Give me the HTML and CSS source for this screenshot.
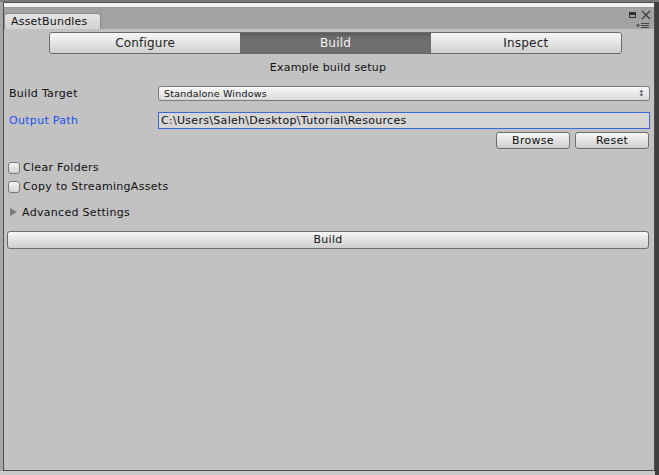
FILE: index.html
```html
<!DOCTYPE html>
<html>
<head>
<meta charset="utf-8">
<link rel="stylesheet" href="styles.css">
</head>
<body>
<div class="backdrop">
  <div class="window">
    <div class="titlestrip"></div>
    <div class="tabbar">
      <div class="tab">AssetBundles</div>
      <div class="wincontrols">
        <div class="ctl-row">
          <span class="maxbox"></span>
          <svg class="closex" width="10" height="10" viewBox="0 0 10 10"><path d="M1 1 L9 9 M9 1 L1 9" stroke="#3a3a3a" stroke-width="1.2"/></svg>
        </div>
        <svg class="menuicon" width="14" height="6" viewBox="0 0 14 6"><path d="M0 1.5 L4 1.5 L2 4.5 Z" fill="#444"/><path d="M5 0.5 H13 M5 2.5 H13 M5 4.5 H13" stroke="#444" stroke-width="1"/></svg>
      </div>
    </div>
    <div class="content">
      <div class="toolbar">
        <div class="tb-btn first">Configure</div>
        <div class="tb-btn active">Build</div>
        <div class="tb-btn last">Inspect</div>
      </div>
      <div class="caption">Example build setup</div>
      <div class="row row-target">
        <div class="label">Build Target</div>
        <div class="popup">Standalone Windows<span class="popup-arrow">&#x2195;</span></div>
      </div>
      <div class="row row-path">
        <div class="label blue">Output Path</div>
        <div class="textfield">C:\Users\Saleh\Desktop\Tutorial\Resources</div>
      </div>
      <div class="btnrow">
        <div class="btn small">Browse</div>
        <div class="btn small">Reset</div>
      </div>
      <div class="check first-check"><span class="box"></span>Clear Folders</div>
      <div class="check"><span class="box"></span>Copy to StreamingAssets</div>
      <div class="foldout"><span class="tri"></span>Advanced Settings</div>
      <div class="btn wide">Build</div>
    </div>
  </div>
</div>
</body>
</html>
```
FILE: styles.css
```css
html, body {
  margin: 0;
  padding: 0;
}
body {
  width: 659px;
  height: 475px;
  overflow: hidden;
  font-family: "DejaVu Sans", Verdana, sans-serif;
  font-size: 11px;
  letter-spacing: 0.3px;
  color: #111;
  background: #9c9c9c;
}
.backdrop {
  width: 659px;
  height: 475px;
  background:
    linear-gradient(to bottom, #7a7a7a 0, #7a7a7a 2px, transparent 2px),
    linear-gradient(to right, transparent 655px, #3e3e3e 655px),
    linear-gradient(to bottom, transparent 471px, #c8c8c8 471px),
    #a6a6a6;
  padding-top: 2px;
  padding-left: 3px;
  box-sizing: border-box;
}
.window {
  width: 652px;
  height: 469px;
  border: 1px solid #4e4e4e;
  box-sizing: border-box;
  background: #c2c2c2;
  display: flex;
  flex-direction: column;
}
.titlestrip {
  height: 4px;
  background: #f2f2f2;
  border-bottom: 1px solid #9a9a9a;
}
.tabbar {
  height: 21px;
  background: #a2a2a2;
  display: flex;
  align-items: flex-start;
  justify-content: space-between;
}
.tab {
  margin-top: 5px;
  height: 16px;
  line-height: 16px;
  width: 97px;
  box-sizing: border-box;
  padding-left: 6px;
  background: linear-gradient(#e4e4e4, #d2d2d2);
  border: 1px solid #8c8c8c;
  border-bottom: none;
  border-radius: 3px 3px 0 0;
  color: #111;
  font-size: 11px;
  letter-spacing: 0.2px;
}
.wincontrols {
  display: flex;
  flex-direction: column;
  align-items: flex-end;
  padding-right: 3px;
  padding-top: 2px;
  gap: 3px;
}
.ctl-row {
  display: flex;
  align-items: center;
  gap: 5px;
}
.maxbox {
  width: 7px;
  height: 6px;
  box-sizing: border-box;
  border: 1px solid #333;
  border-top: 3px solid #333;
}
.closex {
  display: block;
}
.menuicon {
  display: block;
  margin-right: 1px;
}
.content {
  flex: 1;
  padding: 3px 4px 0 4px;
  display: flex;
  flex-direction: column;
}
.toolbar {
  margin-left: 41px;
  width: 573px;
  height: 22px;
  display: flex;
  border: 1px solid #6a6a6a;
  border-radius: 3px;
  box-sizing: border-box;
  overflow: hidden;
}
.tb-btn {
  flex: 1;
  text-align: center;
  line-height: 20px;
  font-size: 12px;
  letter-spacing: 0.2px;
  color: #222;
  background: linear-gradient(#f7f7f7, #dcdcdc 70%, #cfcfcf);
}
.tb-btn.active {
  background: linear-gradient(#5c5c5c, #6e6e6e 25%, #6e6e6e);
  color: #f4f4f4;
}
.caption {
  text-align: center;
  margin-top: 7px;
  height: 14px;
  line-height: 14px;
  padding-right: 2px;
  letter-spacing: 0.2px;
}
.row {
  display: flex;
  align-items: center;
}
.row-target {
  margin-top: 11px;
  height: 15px;
}
.row-path {
  margin-top: 11px;
  height: 17px;
}
.label {
  width: 149px;
  padding-left: 1px;
}
.label.blue {
  color: #1b4fea;
}
.popup {
  width: 492px;
  height: 15px;
  box-sizing: border-box;
  border: 1px solid #7a7a7a;
  border-radius: 3px;
  background: linear-gradient(#f8f8f8, #dadada);
  font-size: 9.5px;
  line-height: 13px;
  padding-left: 5px;
  position: relative;
  letter-spacing: 0.2px;
}
.popup-arrow {
  position: absolute;
  right: 4px;
  top: 0;
  font-size: 8px;
  line-height: 13px;
  color: #333;
}
.textfield {
  width: 492px;
  height: 17px;
  box-sizing: border-box;
  border: 1px solid #3e67d8;
  background: #d6d6d6;
  line-height: 15px;
  padding-left: 2px;
  font-size: 11px;
}
.btnrow {
  display: flex;
  justify-content: flex-end;
  gap: 5px;
  margin-top: 3px;
  padding-right: 1px;
}
.btn {
  box-sizing: border-box;
  border: 1px solid #6e6e6e;
  border-radius: 3px;
  background: linear-gradient(#f7f7f7, #dadada 70%, #cecece);
  text-align: center;
  color: #111;
}
.btn.small {
  width: 74px;
  height: 17px;
  line-height: 15px;
}
.check {
  display: flex;
  align-items: center;
  height: 13px;
  margin-top: 5px;
}
.check.first-check {
  margin-top: 12px;
}
.check + .check {
  margin-top: 6px;
}
.box {
  width: 12px;
  height: 12px;
  box-sizing: border-box;
  border: 1px solid #777;
  border-radius: 3px;
  background: linear-gradient(#f4f4f4, #d2d2d2);
  margin-right: 3px;
}
.foldout {
  display: flex;
  align-items: center;
  height: 14px;
  margin-top: 12px;
}
.tri {
  width: 0;
  height: 0;
  border-top: 4.5px solid transparent;
  border-bottom: 4.5px solid transparent;
  border-left: 7px solid #7a7a7a;
  margin-left: 2px;
  margin-right: 5px;
}
.btn.wide {
  margin-top: 12px;
  width: 642px;
  margin-left: -1px;
  height: 18px;
  line-height: 16px;
}
```
